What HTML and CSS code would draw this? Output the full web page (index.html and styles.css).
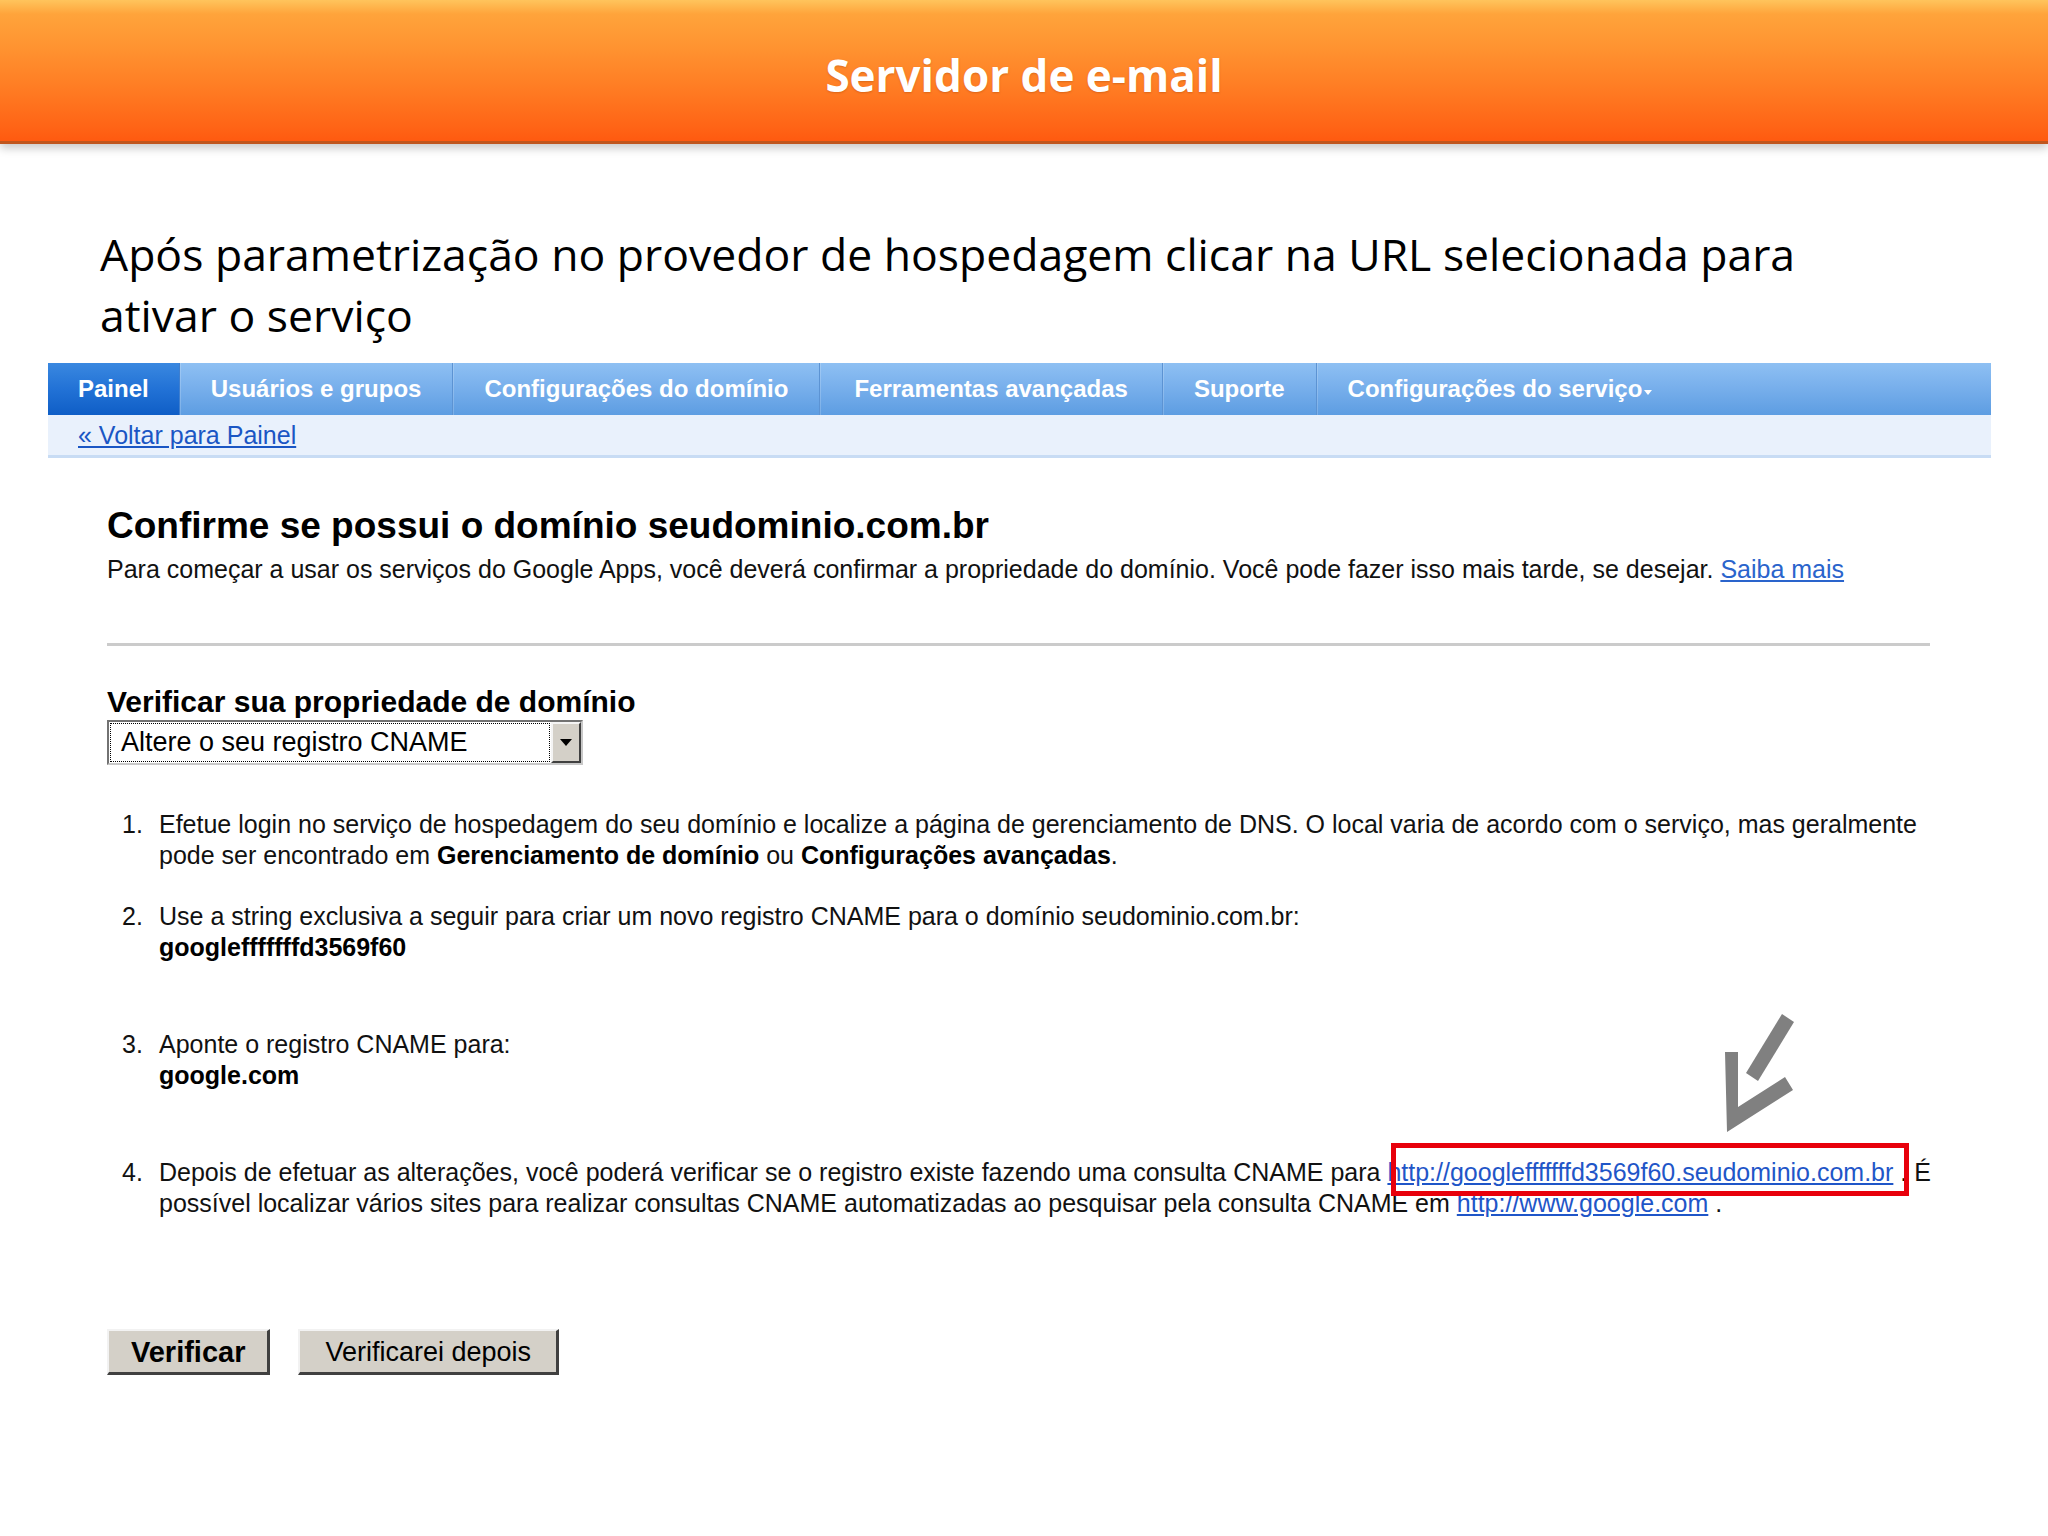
FILE: index.html
```html
<!DOCTYPE html>
<html lang="pt-BR">
<head>
<meta charset="utf-8">
<title>Servidor de e-mail</title>
<link rel="stylesheet" href="styles.css">
</head>
<body>
<header class="banner">
  <h1 class="banner-title">Servidor de e-mail</h1>
</header>
<p class="lead">Após parametrização no provedor de hospedagem clicar na URL selecionada para<br>ativar o serviço</p>
<section class="panel">
  <nav class="tabs">
    <a class="tab tab-active">Painel</a>
    <a class="tab">Usuários e grupos</a>
    <a class="tab">Configurações do domínio</a>
    <a class="tab tab-wide">Ferramentas avançadas</a>
    <a class="tab">Suporte</a>
    <a class="tab tab-last">Configurações do serviço<span class="caret"></span></a>
  </nav>
  <div class="subbar"><a class="link">« Voltar para Painel</a></div>
  <div class="content">
    <h2 class="heading">Confirme se possui o domínio seudominio.com.br</h2>
    <p class="intro">Para começar a usar os serviços do Google Apps, você deverá confirmar a propriedade do domínio. Você pode fazer isso mais tarde, se desejar. <a class="link">Saiba mais</a></p>
    <hr class="rule">
    <h3 class="subheading">Verificar sua propriedade de domínio</h3>
    <div class="select">
      <div class="select-text"><span>Altere o seu registro CNAME</span></div>
      <div class="select-btn"><span class="select-tri"></span></div>
    </div>
    <ol class="steps">
      <li class="step"><span class="num">1.</span><div class="step-text">Efetue login no serviço de hospedagem do seu domínio e localize a página de gerenciamento de DNS. O local varia de acordo com o serviço, mas geralmente<br>pode ser encontrado em <b>Gerenciamento de domínio</b> ou <b>Configurações avançadas</b>.</div></li>
      <li class="step step-gap"><span class="num">2.</span><div class="step-text">Use a string exclusiva a seguir para criar um novo registro CNAME para o domínio seudominio.com.br:<br><b>googlefffffffd3569f60</b></div></li>
      <li class="step step-gap"><span class="num">3.</span><div class="step-text">Aponte o registro CNAME para:<br><b>google.com</b></div></li>
      <li class="step step-last"><span class="num">4.</span><div class="step-text">Depois de efetuar as alterações, você poderá verificar se o registro existe fazendo uma consulta CNAME para <a class="link url highlight">http://googlefffffffd3569f60.seudominio.com.br</a> . É<br>possível localizar vários sites para realizar consultas CNAME automatizadas ao pesquisar pela consulta CNAME em <a class="link url">http://www.google.com</a> .</div></li>
    </ol>
    <div class="actions">
      <button class="btn btn-primary" type="button">Verificar</button>
      <button class="btn btn-secondary" type="button">Verificarei depois</button>
    </div>
  </div>
  <svg class="arrow" width="80" height="125" viewBox="1720 1010 80 125" aria-hidden="true">
    <polygon points="1725,1052 1738,1052 1738,1107 1785,1077 1793,1090 1727,1132" fill="#808080"/>
    <polygon points="1746,1073 1758,1081 1794,1022 1782,1014" fill="#808080"/>
  </svg>
</section>
</body>
</html>
```

FILE: styles.css
```css
* { box-sizing: border-box; }

html, body {
  margin: 0;
  padding: 0;
  background: #ffffff;
}

body {
  width: 2048px;
  min-height: 1536px;
  font-family: "Liberation Sans", Arial, sans-serif;
  color: #000;
  overflow: hidden;
}

/* ---------- Orange banner ---------- */
.banner {
  height: 144px;
  background: linear-gradient(to bottom, #ffc45c 0%, #ffa43b 10%, #ff9230 35%, #ff7a22 65%, #ff6416 90%, #ff5a10 100%);
  border-bottom: 3px solid #c0561e;
  box-shadow: 0 4px 9px rgba(0, 0, 0, 0.22);
}

.banner-title {
  margin: 0;
  padding-top: 45px;
  font-family: "Open Sans", "Noto Sans", sans-serif;
  font-weight: 700;
  font-size: 44px;
  line-height: 60px;
  color: #ffffff;
  text-align: center;
  text-shadow: 0 1px 2px rgba(150, 60, 0, 0.35);
}

/* ---------- Lead text ---------- */
.lead {
  margin: 79px 0 0 100px;
  font-family: "Open Sans", "Noto Sans", sans-serif;
  font-size: 44.5px;
  line-height: 61px;
  color: #000;
  white-space: nowrap;
}

/* ---------- Google Apps panel ---------- */
.panel {
  position: relative;
  margin: 18px 0 0 48px;
  width: 1943px;
}

.tabs {
  display: flex;
  height: 52px;
  background: linear-gradient(to bottom, #8ec0f3 0%, #79b0ec 45%, #5d9de2 100%);
}

.tab {
  padding: 0 31px;
  font-size: 24px;
  font-weight: 700;
  line-height: 52px;
  color: #ffffff;
  white-space: nowrap;
  border-right: 1px solid #5c93d3;
  box-shadow: inset 1px 0 0 rgba(255, 255, 255, 0.18);
}

.tab-wide {
  padding: 0 34px;
}

.tab-active {
  padding: 0 30px;
  background: linear-gradient(to bottom, #3a88e0 0%, #2272d6 50%, #0f5ec6 100%);
  border-right: 1px solid #3f7fcf;
  box-shadow: none;
}

.tab-last {
  border-right: none;
}

.caret {
  display: inline-block;
  width: 0;
  height: 0;
  margin-left: 2px;
  vertical-align: 2px;
  border-left: 4px solid transparent;
  border-right: 4px solid transparent;
  border-top: 5px solid #ffffff;
}

.subbar {
  height: 43px;
  padding-left: 30px;
  background: #e9f1fc;
  border-bottom: 3px solid #c8dcf4;
  font-size: 25px;
  line-height: 40px;
}

.link {
  color: #1a56c4;
  text-decoration: underline;
}

.content {
  padding: 0 61px 0 59px;
}

.heading {
  margin: 46px 0 0;
  font-size: 37px;
  font-weight: 700;
  line-height: 44px;
}

.intro {
  margin: 5px 0 0;
  font-size: 25px;
  line-height: 32px;
  white-space: nowrap;
  color: #111;
}

.intro .link {
  color: #2a64cc;
}

.rule {
  margin: 58px 0 0;
  height: 3px;
  border: none;
  background: #cbcbcb;
}

.subheading {
  margin: 38px 0 0;
  font-size: 30px;
  font-weight: 700;
  line-height: 36px;
}

/* ---------- Select ---------- */
.select {
  display: flex;
  width: 476px;
  height: 45px;
  border: 2px solid #727272;
  border-right-color: #c8c8c8;
  border-bottom-color: #c8c8c8;
  background: #ffffff;
}

.select-text {
  flex: 1;
  margin: 1px;
  padding-left: 10px;
  border: 1px dotted #000;
  font-size: 27px;
  line-height: 37px;
  white-space: nowrap;
  color: #000;
}

.select-btn {
  width: 30px;
  display: flex;
  align-items: center;
  justify-content: center;
  background: #d4d0c8;
  border-style: solid;
  border-width: 2px;
  border-color: #f4f4f4 #404040 #404040 #f4f4f4;
}

.select-tri {
  width: 0;
  height: 0;
  border-left: 6px solid transparent;
  border-right: 6px solid transparent;
  border-top: 7px solid #000;
}

/* ---------- Steps ---------- */
.steps {
  margin: 44px 0 0;
  padding: 0 0 0 15px;
  list-style: none;
  font-size: 25px;
  line-height: 31px;
  color: #111;
}

.step {
  display: flex;
  margin-bottom: 30px;
}

.step-gap {
  margin-bottom: 66px;
}

.step-last {
  margin-bottom: 0;
}

.num {
  width: 37px;
  flex: none;
}

.step-text {
  white-space: nowrap;
}

.step-text b {
  font-weight: 700;
  color: #000;
}

.url {
  color: #1f56c8;
}

.highlight {
  position: relative;
}

.highlight::after {
  content: "";
  position: absolute;
  left: 4px;
  right: -16px;
  top: -15px;
  bottom: -10px;
  border: 5px solid #e8000b;
}

/* ---------- Buttons ---------- */
.actions {
  display: flex;
  gap: 28px;
  margin-top: 110px;
}

.btn {
  height: 46px;
  margin: 0;
  background: #d4d0c8;
  border-style: solid;
  border-width: 2px 3px 3px 2px;
  border-color: #f2f2f2 #404040 #404040 #f2f2f2;
  font-family: "Liberation Sans", Arial, sans-serif;
  color: #000;
  line-height: 38px;
  white-space: nowrap;
}

.btn-primary {
  padding: 0 22px;
  font-size: 29px;
  font-weight: 700;
}

.btn-secondary {
  padding: 0 25px;
  font-size: 27px;
  font-weight: 400;
}

/* ---------- Annotation arrow ---------- */
.arrow {
  position: absolute;
  left: 1672px;
  top: 647px;
}
```
